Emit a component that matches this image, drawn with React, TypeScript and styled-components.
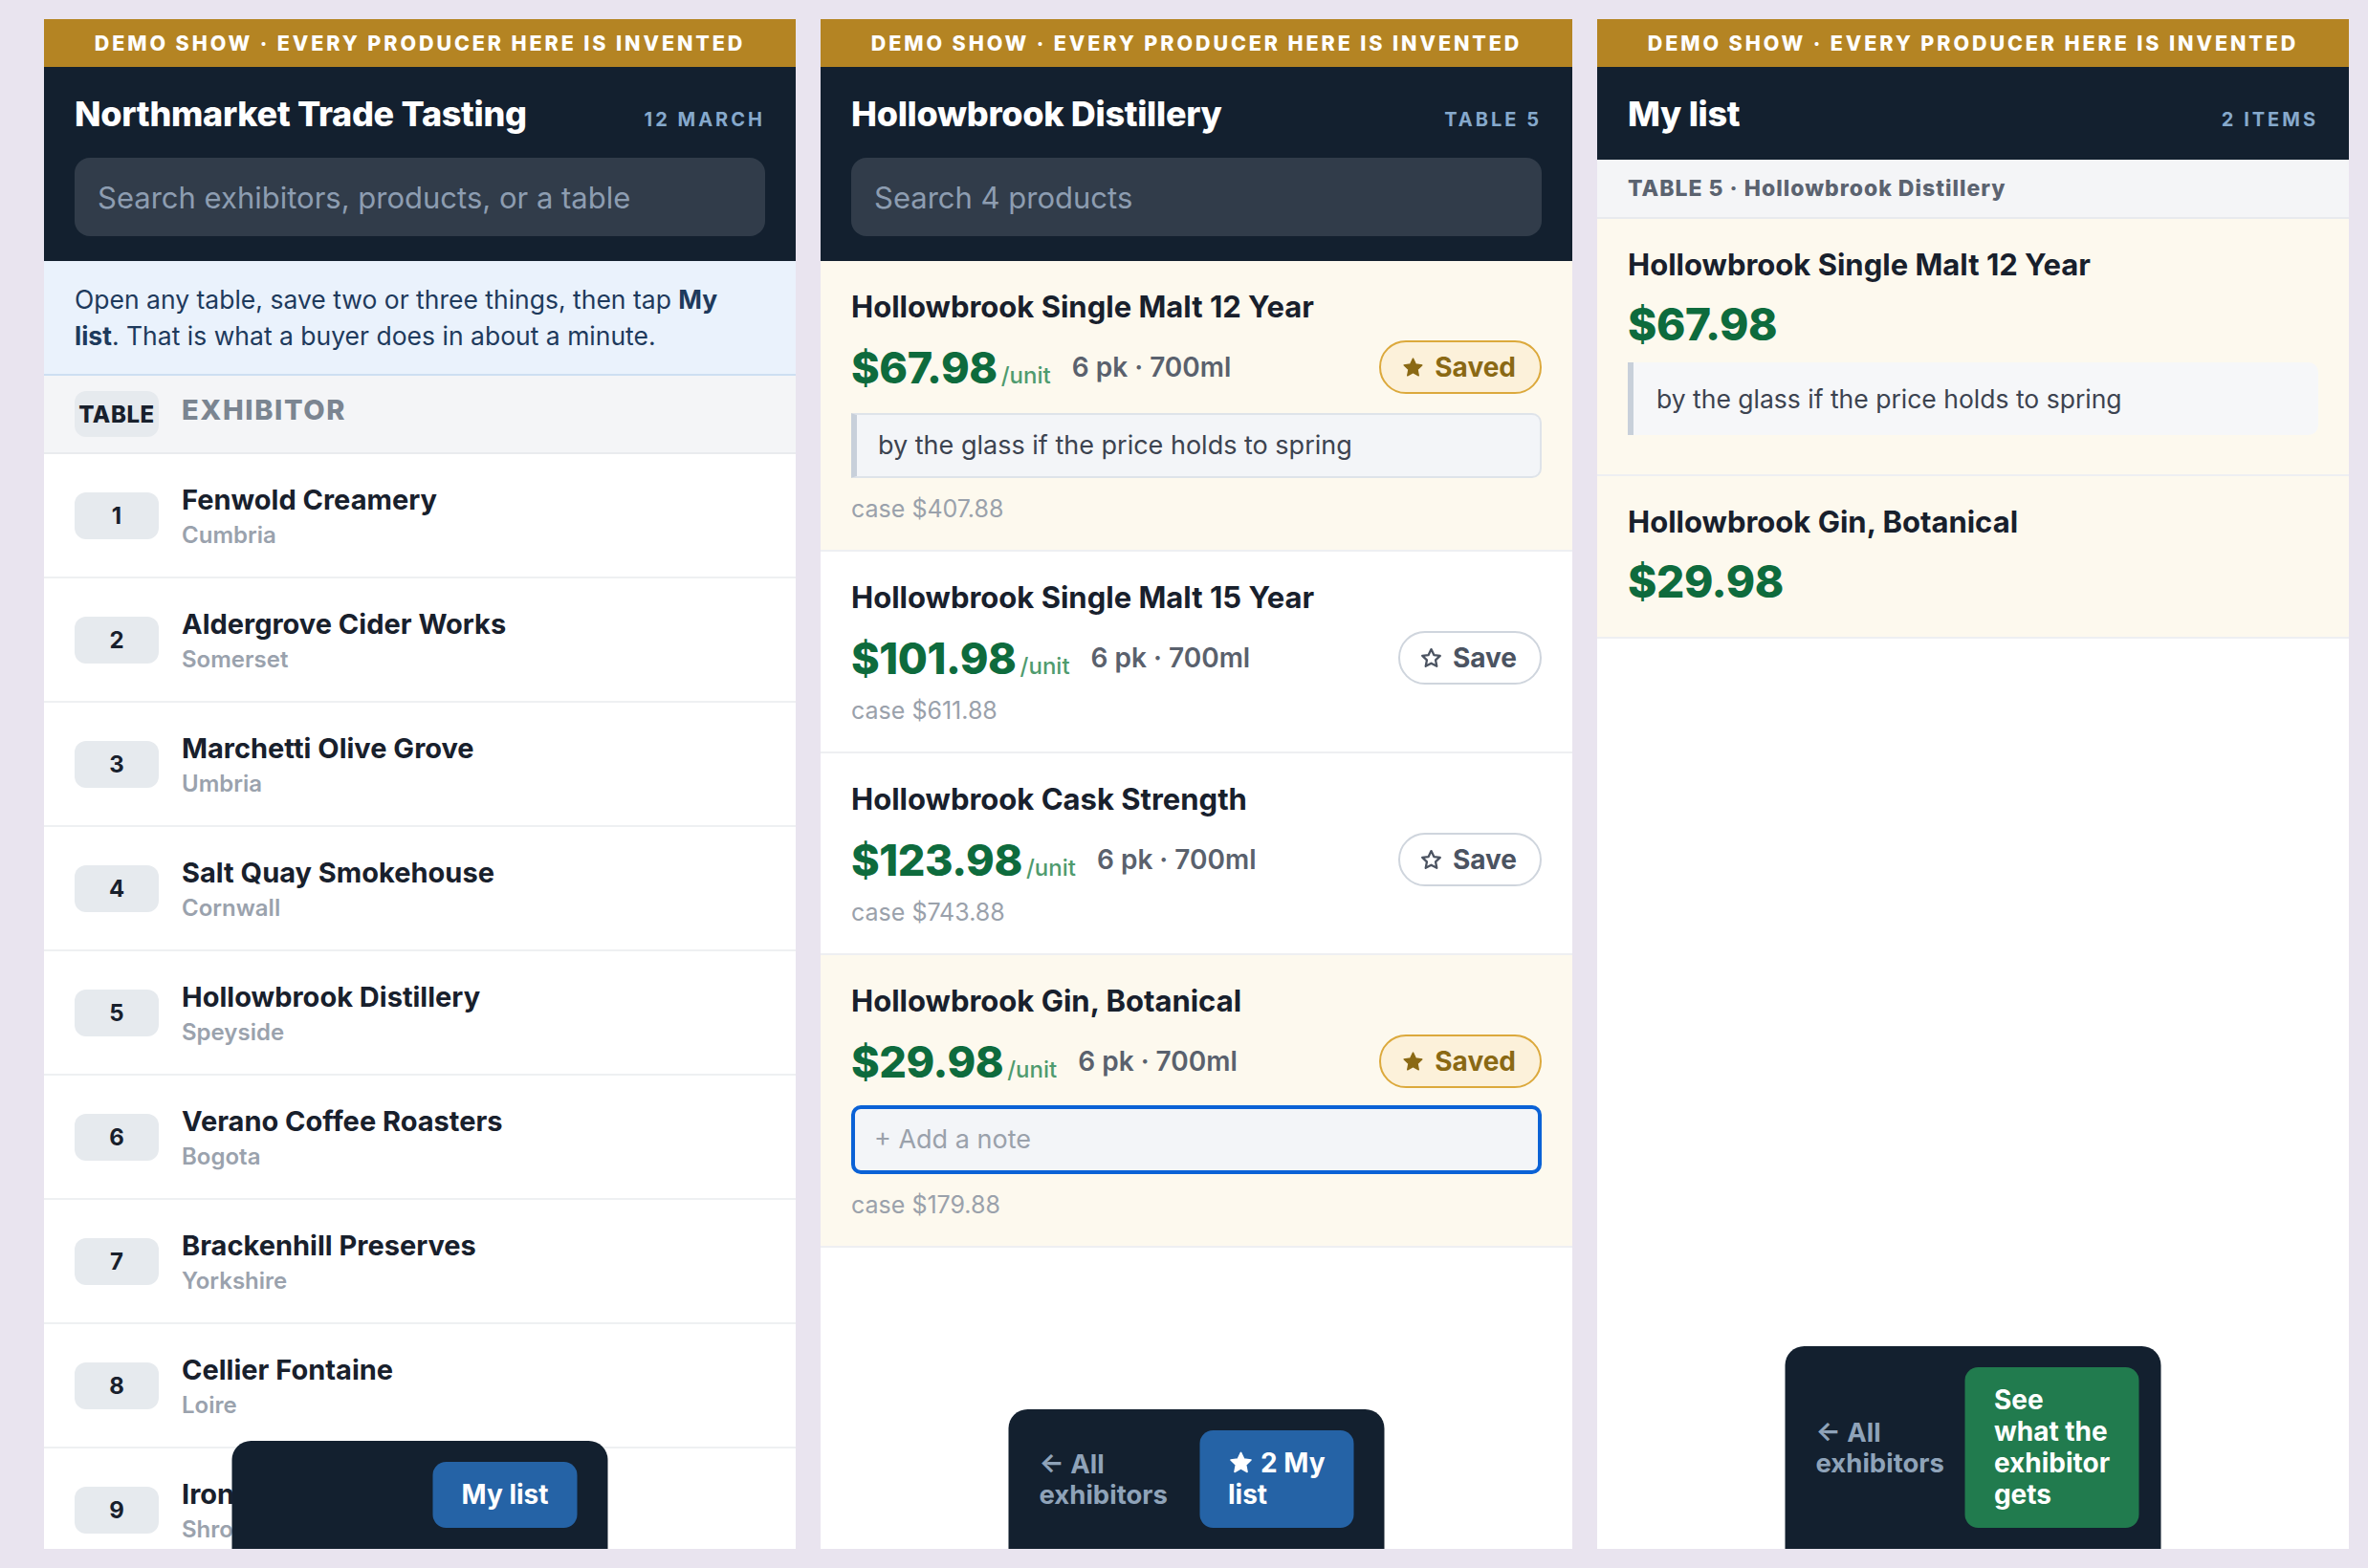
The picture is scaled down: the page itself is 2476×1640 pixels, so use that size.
import React from 'react';
import styled, { createGlobalStyle } from 'styled-components';

const GlobalStyle = createGlobalStyle`
  html, body { margin: 0; padding: 0; background: #e9e4ef; }
  body { font-family: Inter, "Noto Sans", "Liberation Sans", sans-serif; -webkit-font-smoothing: antialiased; }
  * { box-sizing: border-box; }
`;

const Page = styled.main`
  display: flex;
  gap: 26px;
  height: 1640px;
  padding: 20px 20px 20px 46px;
  background: #e9e4ef;
`;

const Phone = styled.section`
  position: relative;
  width: 786px;
  height: 1600px;
  flex-shrink: 0;
  overflow: hidden;
  background: #ffffff;
  display: flex;
  flex-direction: column;
`;

const DemoBanner = styled.div`
  height: 50px;
  flex-shrink: 0;
  background: #b48423;
  color: #ffffff;
  display: flex;
  align-items: center;
  justify-content: center;
  font-size: 21.5px;
  font-weight: 800;
  letter-spacing: 2.9px;
  text-transform: uppercase;
`;

const Header = styled.header`
  background: #13202f;
  padding: 28px 32px 26px;
  flex-shrink: 0;
`;

const HeaderTop = styled.div`
  display: flex;
  align-items: baseline;
  justify-content: space-between;
`;

const Title = styled.h1`
  margin: 0;
  font-size: 36px;
  line-height: 43px;
  font-weight: 800;
  letter-spacing: -0.3px;
  color: #ffffff;
`;

const HeaderMeta = styled.span`
  font-size: 20px;
  font-weight: 700;
  letter-spacing: 3px;
  color: #86a9cc;
  text-transform: uppercase;
`;

const Search = styled.input`
  display: block;
  width: 100%;
  height: 82px;
  margin-top: 24px;
  padding: 0 24px;
  border: 0;
  border-radius: 16px;
  background: #313c4a;
  color: #ffffff;
  font-family: inherit;
  font-size: 31px;
  outline: none;
  &::placeholder { color: #8d9db1; }
`;

const Intro = styled.p`
  margin: 0;
  padding: 21px 36px 21px 32px;
  background: #eaf2fc;
  border-bottom: 2px solid #cddff2;
  color: #1e3a5c;
  font-size: 26.5px;
  line-height: 38px;
  strong { font-weight: 700; }
`;

const ListHead = styled.div`
  display: flex;
  align-items: center;
  gap: 24px;
  padding: 16px 32px;
  background: #f4f5f7;
  border-bottom: 2px solid #e9ebee;
`;

const HeadPill = styled.span`
  width: 88px;
  height: 48px;
  flex-shrink: 0;
  display: flex;
  align-items: flex-end;
  justify-content: center;
  padding-bottom: 11px;
  border-radius: 12px;
  background: #e6eaee;
  color: #18202c;
  font-size: 24px;
  line-height: 24px;
  font-weight: 800;
  letter-spacing: 0.6px;
`;

const HeadLabel = styled.span`
  margin-bottom: 10px;
  color: #7b8591;
  font-size: 29px;
  font-weight: 800;
  letter-spacing: 1.6px;
`;

const Row = styled.div`
  display: flex;
  align-items: center;
  gap: 24px;
  padding: 28.5px 32px;
  border-bottom: 2px solid #eef0f2;
`;

const TableNum = styled.span`
  width: 88px;
  height: 49px;
  flex-shrink: 0;
  display: flex;
  align-items: center;
  justify-content: center;
  border-radius: 12px;
  background: #e6eaee;
  color: #18202c;
  font-size: 24px;
  font-weight: 700;
`;

const Name = styled.div`
  color: #18202c;
  font-size: 29px;
  line-height: 37px;
  font-weight: 700;
`;

const Region = styled.div`
  margin-top: 3px;
  color: #9aa2ad;
  font-size: 24px;
  line-height: 31px;
  font-weight: 600;
`;

const Product = styled.article<{ $saved?: boolean }>`
  padding: 28px 32px 26px;
  background: ${(p) => (p.$saved ? '#fdf9ee' : '#ffffff')};
  border-bottom: 2px solid #eeeff2;
`;

const ProductName = styled.h3`
  margin: 0 0 16px;
  color: #18202c;
  font-size: 31px;
  line-height: 39px;
  font-weight: 700;
`;

const PriceRow = styled.div`
  display: flex;
  align-items: center;
  min-height: 56px;
`;

const PriceGroup = styled.span`
  display: inline-flex;
  align-items: baseline;
`;

const Price = styled.span<{ $big?: boolean }>`
  color: #0e6b3d;
  font-size: ${(p) => (p.$big ? '46px' : '45px')};
  line-height: ${(p) => (p.$big ? '55px' : '53px')};
  font-weight: 800;
  letter-spacing: -0.4px;
`;

const Unit = styled.span`
  margin-left: 4px;
  color: #4f9b6e;
  font-size: 24px;
  font-weight: 500;
`;

const Pack = styled.span`
  margin-left: 22px;
  color: #5a616d;
  font-size: 28px;
  font-weight: 600;
`;

const SaveButton = styled.button<{ $saved?: boolean }>`
  margin-left: auto;
  height: 56px;
  display: inline-flex;
  align-items: center;
  gap: 11px;
  padding: ${(p) => (p.$saved ? '0 25px 0 22px' : '0 24px 0 21px')};
  border-radius: 999px;
  border: 2px solid ${(p) => (p.$saved ? '#dca93c' : '#cfd5dd')};
  background: ${(p) => (p.$saved ? '#fcf1da' : '#ffffff')};
  color: ${(p) => (p.$saved ? '#8a6914' : '#4b5361')};
  font-family: inherit;
  font-size: 28px;
  font-weight: 700;
  cursor: pointer;
`;

const Note = styled.div<{ $plain?: boolean }>`
  margin: ${(p) => (p.$plain ? '12px 0 11px' : '20px 0 0')};
  padding: ${(p) => (p.$plain ? '20px 24px' : '14px 22px')};
  background: ${(p) => (p.$plain ? '#f6f7f9' : '#f3f5f8')};
  border: ${(p) => (p.$plain ? '0' : '2px solid #dee3e9')};
  border-left: 6px solid #c8d0da;
  border-radius: 0 10px 10px 0;
  color: #3c4350;
  font-size: ${(p) => (p.$plain ? '26.5px' : '27px')};
  line-height: 36px;
`;

const NoteInput = styled.input`
  display: block;
  width: 100%;
  margin-top: 18px;
  padding: 14px 20px;
  border: 4px solid #0b62d6;
  border-radius: 10px;
  background: #f3f5f8;
  color: #3c4350;
  font-family: inherit;
  font-size: 27px;
  line-height: 36px;
  outline: none;
  &::placeholder { color: #9aa1ab; }
`;

const CaseLine = styled.div<{ $afterNote?: boolean }>`
  margin-top: ${(p) => (p.$afterNote ? '15px' : '10px')};
  color: #9aa1ab;
  font-size: 25px;
  line-height: 34px;
`;

const SubHeader = styled.div`
  padding: 0 32px;
  height: 62px;
  display: flex;
  align-items: center;
  background: #f4f5f7;
  border-bottom: 2px solid #e8eaee;
  color: #5b6370;
  font-size: 23px;
  font-weight: 800;
  letter-spacing: 1px;
`;

const ListCard = styled.article`
  padding: 28px 32px 30px;
  background: #fdf9ee;
  border-bottom: 2px solid #eeeff2;
`;

const Dock = styled.nav<{ $end?: boolean }>`
  position: absolute;
  left: 50%;
  bottom: 0;
  transform: translateX(-50%);
  width: 393px;
  display: flex;
  align-items: center;
  justify-content: ${(p) => (p.$end ? 'flex-end' : 'space-between')};
  gap: 22px;
  padding: 22px 32px;
  background: #13202f;
  border-radius: 20px 20px 0 0;
`;

const BackLink = styled.a`
  color: #8fa3b9;
  font-size: 27.5px;
  line-height: 32px;
  font-weight: 700;
  white-space: nowrap;
  text-decoration: none;
  cursor: pointer;
`;

const DockButton = styled.button<{ $tone: 'blue' | 'green' }>`
  flex-shrink: 0;
  padding: 18px 30px;
  border: 0;
  border-radius: 14px;
  background: ${(p) => (p.$tone === 'green' ? '#217b4e' : '#2563a6')};
  color: #ffffff;
  font-family: inherit;
  font-size: 28px;
  line-height: 33px;
  font-weight: 700;
  text-align: left;
  white-space: nowrap;
  cursor: pointer;
  svg { vertical-align: -3px; margin-right: 8px; }
`;

const StarGlyph = ({ filled, size }: { filled?: boolean; size: number }) => (
  <svg
    width={size}
    height={size}
    viewBox="0 0 24 24"
    fill={filled ? 'currentColor' : 'none'}
    stroke="currentColor"
    strokeWidth={filled ? 1.5 : 2.4}
    strokeLinejoin="round"
  >
    <path d="M12 2.2l2.95 6.2 6.75.85-4.95 4.7 1.27 6.75L12 17.4l-6.02 3.3 1.27-6.75L2.3 9.25l6.75-.85z" />
  </svg>
);

const exhibitors: [number, string, string][] = [
  [1, 'Fenwold Creamery', 'Cumbria'],
  [2, 'Aldergrove Cider Works', 'Somerset'],
  [3, 'Marchetti Olive Grove', 'Umbria'],
  [4, 'Salt Quay Smokehouse', 'Cornwall'],
  [5, 'Hollowbrook Distillery', 'Speyside'],
  [6, 'Verano Coffee Roasters', 'Bogota'],
  [7, 'Brackenhill Preserves', 'Yorkshire'],
  [8, 'Cellier Fontaine', 'Loire'],
  [9, 'Ironbridge Smokery', 'Shropshire'],
];

type ProductItem = {
  name: string;
  price: string;
  caseTotal: string;
  saved?: boolean;
  note?: string;
  editing?: boolean;
};

const products: ProductItem[] = [
  { name: 'Hollowbrook Single Malt 12 Year', price: '$67.98', caseTotal: '$407.88', saved: true, note: 'by the glass if the price holds to spring' },
  { name: 'Hollowbrook Single Malt 15 Year', price: '$101.98', caseTotal: '$611.88' },
  { name: 'Hollowbrook Cask Strength', price: '$123.98', caseTotal: '$743.88' },
  { name: 'Hollowbrook Gin, Botanical', price: '$29.98', caseTotal: '$179.88', saved: true, editing: true },
];

const Banner = () => <DemoBanner>Demo show · every producer here is invented</DemoBanner>;

const ExhibitorsScreen = () => (
  <Phone>
    <Banner />
    <Header>
      <HeaderTop>
        <Title>Northmarket Trade Tasting</Title>
        <HeaderMeta>12 March</HeaderMeta>
      </HeaderTop>
      <Search placeholder="Search exhibitors, products, or a table" />
    </Header>
    <Intro>
      Open any table, save two or three things, then tap <strong>My list</strong>. That is what a buyer does in about a minute.
    </Intro>
    <ListHead>
      <HeadPill>TABLE</HeadPill>
      <HeadLabel>EXHIBITOR</HeadLabel>
    </ListHead>
    {exhibitors.map(([num, name, region]) => (
      <Row key={num}>
        <TableNum>{num}</TableNum>
        <div>
          <Name>{name}</Name>
          <Region>{region}</Region>
        </div>
      </Row>
    ))}
    <Dock $end>
      <DockButton $tone="blue">My list</DockButton>
    </Dock>
  </Phone>
);

const TableScreen = () => (
  <Phone>
    <Banner />
    <Header>
      <HeaderTop>
        <Title>Hollowbrook Distillery</Title>
        <HeaderMeta>Table 5</HeaderMeta>
      </HeaderTop>
      <Search placeholder="Search 4 products" />
    </Header>
    {products.map((p) => (
      <Product key={p.name} $saved={p.saved}>
        <ProductName>{p.name}</ProductName>
        <PriceRow>
          <PriceGroup>
            <Price>{p.price}</Price>
            <Unit>/unit</Unit>
          </PriceGroup>
          <Pack>6 pk · 700ml</Pack>
          <SaveButton $saved={p.saved}>
            <StarGlyph filled={p.saved} size={23} />
            {p.saved ? 'Saved' : 'Save'}
          </SaveButton>
        </PriceRow>
        {p.note && <Note>{p.note}</Note>}
        {p.editing && <NoteInput placeholder="+ Add a note" />}
        <CaseLine $afterNote={Boolean(p.note || p.editing)}>case {p.caseTotal}</CaseLine>
      </Product>
    ))}
    <Dock>
      <BackLink>
        ← All
        <br />
        exhibitors
      </BackLink>
      <DockButton $tone="blue">
        <StarGlyph filled size={26} />2 My
        <br />
        list
      </DockButton>
    </Dock>
  </Phone>
);

const MyListScreen = () => (
  <Phone>
    <Banner />
    <Header>
      <HeaderTop>
        <Title>My list</Title>
        <HeaderMeta>2 items</HeaderMeta>
      </HeaderTop>
    </Header>
    <SubHeader>TABLE 5 · Hollowbrook Distillery</SubHeader>
    <ListCard>
      <ProductName>Hollowbrook Single Malt 12 Year</ProductName>
      <Price $big>$67.98</Price>
      <Note $plain>by the glass if the price holds to spring</Note>
    </ListCard>
    <ListCard>
      <ProductName>Hollowbrook Gin, Botanical</ProductName>
      <Price $big>$29.98</Price>
    </ListCard>
    <Dock>
      <BackLink>
        ← All
        <br />
        exhibitors
      </BackLink>
      <DockButton $tone="green">
        See
        <br />
        what the
        <br />
        exhibitor
        <br />
        gets
      </DockButton>
    </Dock>
  </Phone>
);

export default function App() {
  return (
    <>
      <GlobalStyle />
      <Page>
        <ExhibitorsScreen />
        <TableScreen />
        <MyListScreen />
      </Page>
    </>
  );
}
